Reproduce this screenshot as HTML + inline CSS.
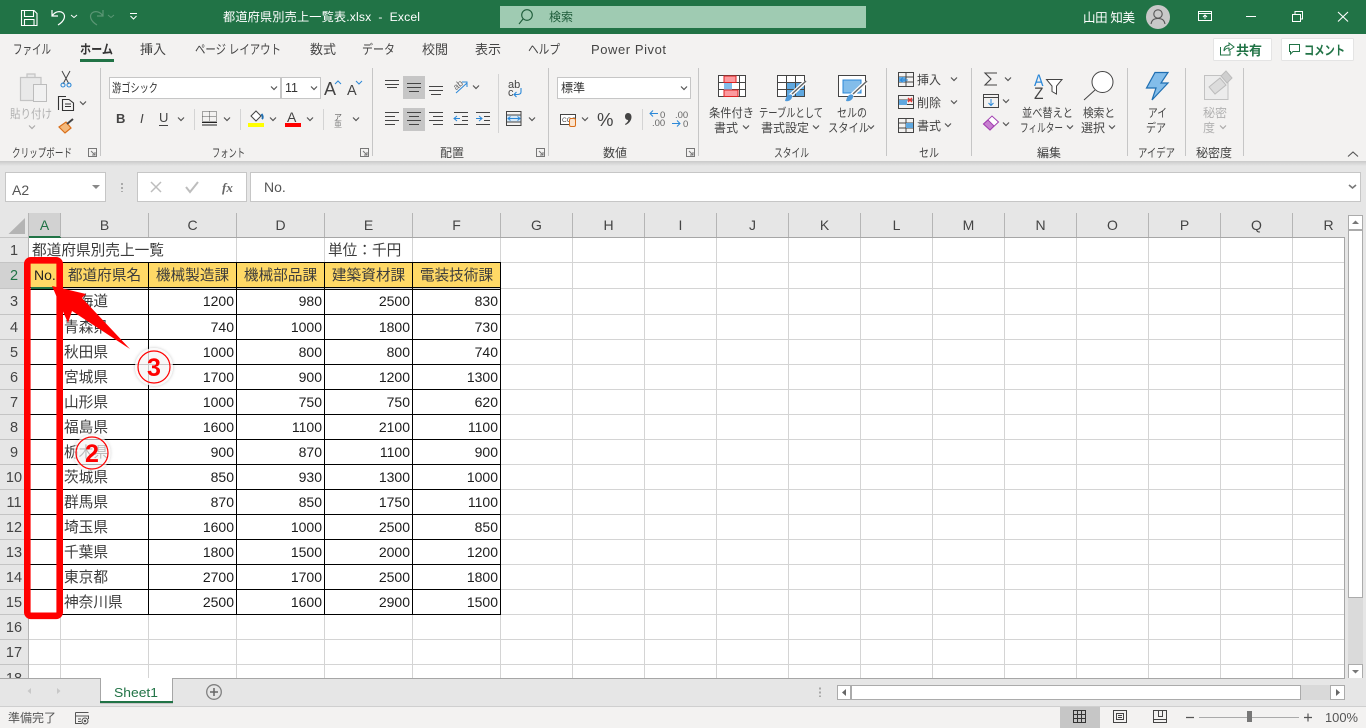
<!DOCTYPE html>
<html lang="ja"><head><meta charset="utf-8"><title>Excel</title>
<style>
html,body{margin:0;padding:0;width:1366px;height:728px;overflow:hidden;background:#e6e6e6}
svg{display:block;font-family:"Liberation Sans","Noto Sans CJK JP",sans-serif}
.r{font-size:12px;fill:#444}
.t{font-size:13px;fill:#444}
.g{font-size:12px;fill:#555}
.d{font-size:14px;fill:#1c1c1c;text-anchor:end}
.c{font-size:14.67px;fill:#3c3c3c}
.h{font-size:14.67px;fill:#3c3c3c;text-anchor:middle}
.ch{font-size:14px;fill:#444;text-anchor:middle}
.rh{font-size:14.5px;fill:#444;text-anchor:middle}
.w{font-size:12.2px;fill:#fff}
.dis{font-size:12px;fill:#b1b1b1}
</style></head><body>
<svg width="1366" height="728" viewBox="0 0 1366 728" xmlns="http://www.w3.org/2000/svg">
<defs>
<path id="cv" d="M-3 -1.5L0 1.5L3 -1.5" fill="none" stroke="#555" stroke-width="1.2"/>
<path id="dl" d="M-4.5 -4.5H3.5V3.5H-4.5ZM-2 -2L2 2M2 -1V2H-1" fill="none" stroke="#777" stroke-width="1"/>
<linearGradient id="sh" x1="0" y1="0" x2="0" y2="1"><stop offset="0" stop-color="#c9c9c9"/><stop offset="1" stop-color="#e6e6e6"/></linearGradient>
<filter id="glow" x="-30%" y="-30%" width="160%" height="160%"><feDropShadow dx="0" dy="0" stdDeviation="1.5" flood-color="#000" flood-opacity=".3"/></filter>
</defs>

<!-- sheet area -->
<rect x="0" y="165" width="1366" height="563" fill="#e6e6e6"/>
<rect x="29" y="238" width="1316" height="440" fill="#fff"/>

<!-- light grid -->
<path d="M60.5 238V678M148.5 238V678M236.5 238V678M324.5 238V678M412.5 238V678M500.5 238V678M572.5 238V678M644.5 238V678M716.5 238V678M788.5 238V678M860.5 238V678M932.5 238V678M1004.5 238V678M1076.5 238V678M1148.5 238V678M1220.5 238V678M1292.5 238V678" stroke="#d4d4d4" fill="none"/>
<path d="M29 262.5H1345M29 288.5H1345M29 314.5H1345M29 339.5H1345M29 364.5H1345M29 389.5H1345M29 414.5H1345M29 439.5H1345M29 464.5H1345M29 489.5H1345M29 514.5H1345M29 539.5H1345M29 564.5H1345M29 589.5H1345M29 614.5H1345M29 639.5H1345M29 664.5H1345" stroke="#d4d4d4" fill="none"/>
<!-- A1 text overflows across B1 and C1: no gridlines there -->
<rect x="29" y="238" width="207" height="24" fill="#fff"/>

<!-- column headers -->
<rect x="29" y="213" width="32" height="24" fill="#d2d2d2"/>
<rect x="29" y="236" width="32" height="2" fill="#217346"/>
<path d="M60.5 213V237M148.5 213V237M236.5 213V237M324.5 213V237M412.5 213V237M500.5 213V237M572.5 213V237M644.5 213V237M716.5 213V237M788.5 213V237M860.5 213V237M932.5 213V237M1004.5 213V237M1076.5 213V237M1148.5 213V237M1220.5 213V237M1292.5 213V237M28.5 213V678" stroke="#b5b5b5" fill="none"/>
<path d="M61 237.5H1345M1344.5 237V678" stroke="#a6a6a6" fill="none"/>
<path d="M25 218V234H8.5Z" fill="#b4b4b4"/>
<g class="ch">
<text x="44.5" y="230" style="fill:#217346">A</text><text x="104.5" y="230">B</text><text x="192.5" y="230">C</text><text x="280.5" y="230">D</text><text x="368.5" y="230">E</text><text x="456.5" y="230">F</text><text x="536.5" y="230">G</text><text x="608.5" y="230">H</text><text x="680.5" y="230">I</text><text x="752.5" y="230">J</text><text x="824.5" y="230">K</text><text x="896.5" y="230">L</text><text x="968.5" y="230">M</text><text x="1040.5" y="230">N</text><text x="1112.5" y="230">O</text><text x="1184.5" y="230">P</text><text x="1256.5" y="230">Q</text><text x="1328.5" y="230">R</text>
</g>

<!-- row headers -->
<rect x="0" y="263" width="28" height="25" fill="#d2d2d2"/>
<path d="M0 262.5H28M0 288.5H28M0 314.5H28M0 339.5H28M0 364.5H28M0 389.5H28M0 414.5H28M0 439.5H28M0 464.5H28M0 489.5H28M0 514.5H28M0 539.5H28M0 564.5H28M0 589.5H28M0 614.5H28M0 639.5H28M0 664.5H28M0 237.5H28" stroke="#c4c4c4" fill="none"/>
<g class="rh">
<text x="14" y="255">1</text><text x="14" y="280" style="fill:#217346">2</text><text x="14" y="306">3</text><text x="14" y="332">4</text><text x="14" y="357">5</text><text x="14" y="382">6</text><text x="14" y="407">7</text><text x="14" y="432">8</text><text x="14" y="457">9</text><text x="14" y="482">10</text><text x="14" y="507">11</text><text x="14" y="532">12</text><text x="14" y="557">13</text><text x="14" y="582">14</text><text x="14" y="607">15</text><text x="14" y="632">16</text><text x="14" y="657">17</text><text x="14" y="683">18</text>
</g>

<!-- table -->
<rect x="29" y="263" width="472" height="25" fill="#ffd966"/>
<path d="M29 262.5H501M29 287.5H501M29 289.5H501M29 314.5H501M29 339.5H501M29 364.5H501M29 389.5H501M29 414.5H501M29 439.5H501M29 464.5H501M29 489.5H501M29 514.5H501M29 539.5H501M29 564.5H501M29 589.5H501M29 614.5H501M60.5 262V615M148.5 262V615M236.5 262V615M324.5 262V615M412.5 262V615M500.5 262V615" stroke="#000" fill="none"/>
<rect x="31" y="287" width="23" height="2" fill="#217346"/>

<text class="c" x="32" y="255">都道府県別売上一覧</text>
<text class="c" x="328" y="255">単位：千円</text>
<text x="34" y="280" style="font-size:14px;fill:#222">No.</text>
<text class="h" x="104.5" y="280">都道府県名</text><text class="h" x="192.5" y="280">機械製造課</text><text class="h" x="280.5" y="280">機械部品課</text><text class="h" x="368.5" y="280">建築資材課</text><text class="h" x="456.5" y="280">電装技術課</text>

<text class="c" x="64" y="306">北海道</text><text class="d" x="234" y="306">1200</text><text class="d" x="322" y="306">980</text><text class="d" x="410" y="306">2500</text><text class="d" x="498" y="306">830</text>
<text class="c" x="64" y="332">青森県</text><text class="d" x="234" y="332">740</text><text class="d" x="322" y="332">1000</text><text class="d" x="410" y="332">1800</text><text class="d" x="498" y="332">730</text>
<text class="c" x="64" y="357">秋田県</text><text class="d" x="234" y="357">1000</text><text class="d" x="322" y="357">800</text><text class="d" x="410" y="357">800</text><text class="d" x="498" y="357">740</text>
<text class="c" x="64" y="382">宮城県</text><text class="d" x="234" y="382">1700</text><text class="d" x="322" y="382">900</text><text class="d" x="410" y="382">1200</text><text class="d" x="498" y="382">1300</text>
<text class="c" x="64" y="407">山形県</text><text class="d" x="234" y="407">1000</text><text class="d" x="322" y="407">750</text><text class="d" x="410" y="407">750</text><text class="d" x="498" y="407">620</text>
<text class="c" x="64" y="432">福島県</text><text class="d" x="234" y="432">1600</text><text class="d" x="322" y="432">1100</text><text class="d" x="410" y="432">2100</text><text class="d" x="498" y="432">1100</text>
<text class="c" x="64" y="457">栃木県</text><text class="d" x="234" y="457">900</text><text class="d" x="322" y="457">870</text><text class="d" x="410" y="457">1100</text><text class="d" x="498" y="457">900</text>
<text class="c" x="64" y="482">茨城県</text><text class="d" x="234" y="482">850</text><text class="d" x="322" y="482">930</text><text class="d" x="410" y="482">1300</text><text class="d" x="498" y="482">1000</text>
<text class="c" x="64" y="507">群馬県</text><text class="d" x="234" y="507">870</text><text class="d" x="322" y="507">850</text><text class="d" x="410" y="507">1750</text><text class="d" x="498" y="507">1100</text>
<text class="c" x="64" y="532">埼玉県</text><text class="d" x="234" y="532">1600</text><text class="d" x="322" y="532">1000</text><text class="d" x="410" y="532">2500</text><text class="d" x="498" y="532">850</text>
<text class="c" x="64" y="557">千葉県</text><text class="d" x="234" y="557">1800</text><text class="d" x="322" y="557">1500</text><text class="d" x="410" y="557">2000</text><text class="d" x="498" y="557">1200</text>
<text class="c" x="64" y="582">東京都</text><text class="d" x="234" y="582">2700</text><text class="d" x="322" y="582">1700</text><text class="d" x="410" y="582">2500</text><text class="d" x="498" y="582">1800</text>
<text class="c" x="64" y="607">神奈川県</text><text class="d" x="234" y="607">2500</text><text class="d" x="322" y="607">1600</text><text class="d" x="410" y="607">2900</text><text class="d" x="498" y="607">1500</text>

<!-- annotations -->
<rect x="27.3" y="260.3" width="32.4" height="355.5" rx="3.5" fill="none" stroke="#f00" stroke-width="6.6"/>
<path d="M52 286L86 294L82 298L130 349L72 311L68 323Z" fill="#f00"/>
<circle cx="154" cy="367" r="19" fill="#fff" fill-opacity=".75" filter="url(#glow)"/>
<circle cx="154" cy="367" r="16" fill="none" stroke="#f00" stroke-width="1.2"/>
<text x="154" y="376" text-anchor="middle" style="font-size:25px;font-weight:bold;fill:#f00">3</text>
<circle cx="92" cy="453" r="18.5" fill="#fff" fill-opacity=".62" filter="url(#glow)"/>
<circle cx="92" cy="453" r="16" fill="none" stroke="#f00" stroke-width="1.2"/>
<text x="92" y="462" text-anchor="middle" style="font-size:25px;font-weight:bold;fill:#f00">2</text>

<!-- vertical scrollbar -->
<rect x="1345" y="213" width="21" height="465" fill="#e6e6e6"/>
<rect x="1348" y="230" width="15" height="434" fill="#dadada"/>
<rect x="1348.5" y="215.5" width="14" height="14" fill="#fff" stroke="#ababab"/>
<path d="M1352 224H1359L1355.5 220.5Z" fill="#777"/>
<rect x="1348.5" y="230.5" width="14" height="367" fill="#fff" stroke="#ababab"/>
<rect x="1348.5" y="664.5" width="14" height="14" fill="#fff" stroke="#ababab"/>
<path d="M1352 670H1359L1355.5 673.5Z" fill="#777"/>
<path d="M1344.5 237V678" stroke="#a6a6a6"/>

<!-- sheet tabs bar -->
<rect x="0" y="678" width="1366" height="28" fill="#e6e6e6"/>
<path d="M0 678.5H1345" stroke="#a6a6a6"/>
<path d="M31 688V694L27.5 691ZM57 688V694L60.5 691Z" fill="#c8c8c8"/>
<path d="M100.5 679V703H172.5V679" fill="#fff" stroke="#a6a6a6"/>
<rect x="101" y="678" width="71" height="2" fill="#fff"/>
<rect x="100" y="701" width="73" height="2" fill="#217346"/>
<text x="114" y="697" textLength="44" lengthAdjust="spacingAndGlyphs" style="font-size:13px;fill:#217346">Sheet1</text>
<circle cx="214" cy="692" r="7.3" fill="none" stroke="#808080" stroke-width="1.3"/>
<path d="M210 692H218M214 688V696" stroke="#666" stroke-width="1.5"/>
<path d="M820 687.5V697" stroke="#a8a8a8" stroke-width="2" stroke-dasharray="2 2"/>
<rect x="837.5" y="685.5" width="13" height="14" fill="#fff" stroke="#ababab"/>
<path d="M846 689V696L842 692.5Z" fill="#666"/>
<rect x="851.5" y="685.5" width="449" height="14" fill="#fff" stroke="#ababab"/>
<rect x="1301" y="685" width="29" height="15" fill="#d9d9d9"/>
<rect x="1330.5" y="685.5" width="14" height="14" fill="#fff" stroke="#ababab"/>
<path d="M1336 689V696L1340 692.5Z" fill="#666"/>

<!-- status bar -->
<rect x="0" y="706" width="1366" height="22" fill="#f3f2f1"/>
<path d="M0 706.5H1366" stroke="#cfcfcf"/>
<text x="8" y="722" textLength="48" lengthAdjust="spacingAndGlyphs" style="font-size:12px;fill:#555">準備完了</text>
<path d="M75.5 712.5H88.5M75.5 712.5V723.5H82M75.5 716H88.5V719M78 719H81M78 721.5H81" stroke="#555" fill="none"/>
<circle cx="85" cy="721" r="3" fill="none" stroke="#555"/><circle cx="85" cy="721" r="1.2" fill="#555"/>
<rect x="1060" y="707" width="40" height="21" fill="#c6c6c6"/>
<path d="M1073.5 710.5H1085.5V722.5H1073.5ZM1073.5 714.5H1085.5M1073.5 718.5H1085.5M1077.5 710.5V722.5M1081.5 710.5V722.5" fill="none" stroke="#333"/>
<path d="M1113.5 710.5H1126.5V722.5H1113.5ZM1116.5 713.5H1123.5V719.5H1116.5ZM1118 715.5H1122M1118 717.5H1122" fill="none" stroke="#444"/>
<path d="M1153.5 710.5H1166.5V722.5H1153.5ZM1153.5 719.5H1166.5M1158.5 710.5V716.5H1162.5V710.5" fill="none" stroke="#444"/>
<path d="M1186 717.5H1194M1304 717.5H1312M1308 713.5V721.5" stroke="#555" stroke-width="1.2"/>
<path d="M1199 717.5H1299" stroke="#aaa"/>
<rect x="1247" y="711" width="5" height="11" fill="#777"/>
<text x="1325" y="722" textLength="33" lengthAdjust="spacingAndGlyphs" style="font-size:13px;fill:#555">100%</text>

<!-- formula bar -->
<rect x="0" y="161" width="1366" height="5" fill="url(#sh)"/>
<rect x="5.5" y="172.5" width="100" height="29" fill="#fff" stroke="#c6c6c6"/>
<text x="12" y="195" style="font-size:14px;fill:#555">A2</text>
<path d="M92 185H100L96 189Z" fill="#888"/>
<path d="M122 183V192" stroke="#aaa" stroke-width="2" stroke-dasharray="2 2"/>
<rect x="137.5" y="172.5" width="109" height="29" fill="#fff" stroke="#c6c6c6"/>
<path d="M151 182L161 192M161 182L151 192" stroke="#bdbdbd" stroke-width="1.5"/>
<path d="M186 187L190 192L198 182" stroke="#bdbdbd" stroke-width="2" fill="none"/>
<text x="222" y="192" style="font-size:13px;font-family:'Liberation Serif',serif;font-style:italic;font-weight:bold;fill:#666">fx</text>
<rect x="250.5" y="172.5" width="1110" height="29" fill="#fff" stroke="#c6c6c6"/>
<text x="264" y="192" style="font-size:14px;fill:#555">No.</text>
<path d="M1349 185L1352.5 188L1356 185" stroke="#777" stroke-width="1.6" fill="none"/>

<!-- ribbon -->
<rect x="0" y="34" width="1366" height="127" fill="#f3f2f1"/>
<rect x="0" y="0" width="1366" height="34" fill="#217346"/>

<!-- title bar -->
<path d="M21.5 10.5H34L37 13.5V25.5H21.5ZM24.5 10.5V16.5H33.5V10.5M24.5 25.5V19.5H34V25.5" fill="none" stroke="#fff" stroke-width="1.1"/>
<path d="M52 10V16H58M52.5 15.5C55 11.5 60 10.5 63 13C66 16 64.5 21 58 25" fill="none" stroke="#fff" stroke-width="1.2"/>
<path d="M71 15L74 17.5L77 15" fill="none" stroke="#fff" stroke-width="1"/>
<path d="M103 10V16H97M102.5 15.5C100 11.5 95 10.5 92 13C89 16 90.5 21 97 25" fill="none" stroke="#5b9674" stroke-width="1.2"/>
<path d="M108 15L111 17.5L114 15" fill="none" stroke="#5b9674" stroke-width="1"/>
<path d="M130 13.5H137M130.5 16L133.5 19L136.5 16" fill="none" stroke="#fff" stroke-width="1"/>
<text class="w" x="223" y="21" textLength="197" lengthAdjust="spacing">都道府県別売上一覧表.xlsx&#160;&#160;-&#160;&#160;Excel</text>
<rect x="500" y="6" width="366" height="22" fill="#9fcbb2"/>
<circle cx="527" cy="15" r="5.3" fill="none" stroke="#1e5c3a" stroke-width="1.1"/>
<path d="M523 19L519 24" stroke="#1e5c3a" stroke-width="1.1"/>
<text x="549" y="21" style="font-size:12px;fill:#1e5c3a">検索</text>
<text class="w" x="1083" y="22" textLength="52" lengthAdjust="spacing" style="font-size:12.5px">山田 知美</text>
<circle cx="1158" cy="17" r="12" fill="#c8c8c8"/>
<circle cx="1158" cy="14" r="4.2" fill="none" stroke="#555" stroke-width="1.1"/>
<path d="M1151 24C1152 19 1155 18.5 1158 18.5C1161 18.5 1164 19 1165 24" fill="none" stroke="#555" stroke-width="1.1"/>
<path d="M1198.5 11.5H1211.5V20.5H1198.5ZM1198.5 13.5H1211.5M1205 19V15M1203 17L1205 15L1207 17" fill="none" stroke="#fff"/>
<path d="M1246 16.5H1256" stroke="#fff"/>
<path d="M1292.5 14.5H1300.5V21.5H1292.5ZM1295 14V11.5H1302.5V19H1300.5" fill="none" stroke="#fff"/>
<path d="M1338 12L1348 21.5M1348 12L1338 21.5" stroke="#fff" stroke-width="1.1"/>

<!-- tabs -->
<g class="t">
<text x="13" y="54" textLength="38" lengthAdjust="spacingAndGlyphs">ファイル</text>
<text x="80" y="54" textLength="33" lengthAdjust="spacingAndGlyphs" style="font-weight:bold;fill:#333">ホーム</text>
<text x="140" y="54" textLength="26" lengthAdjust="spacingAndGlyphs">挿入</text>
<text x="195" y="54" textLength="86" lengthAdjust="spacingAndGlyphs">ページ レイアウト</text>
<text x="310" y="54" textLength="26" lengthAdjust="spacingAndGlyphs">数式</text>
<text x="362" y="54" textLength="33" lengthAdjust="spacingAndGlyphs">データ</text>
<text x="422" y="54" textLength="26" lengthAdjust="spacingAndGlyphs">校閲</text>
<text x="475" y="54" textLength="26" lengthAdjust="spacingAndGlyphs">表示</text>
<text x="528" y="54" textLength="32" lengthAdjust="spacingAndGlyphs">ヘルプ</text>
<text x="591" y="54" textLength="75" lengthAdjust="spacing">Power Pivot</text>
</g>
<rect x="80" y="59" width="34" height="3" fill="#217346"/>

<rect x="1213.5" y="38.5" width="58" height="22" rx="1" fill="#fff" stroke="#e4e4e4"/>
<path d="M1220.5 47V55H1230V51M1224 51C1224 47 1226 45.5 1229 45.5V43L1234 47L1229 50.5V48C1227 48 1225 49 1224 51Z" fill="none" stroke="#217346"/>
<text x="1236" y="55" textLength="26" style="font-size:13px;font-weight:bold;fill:#217346">共有</text>
<rect x="1281.5" y="38.5" width="72" height="22" rx="1" fill="#fff" stroke="#e4e4e4"/>
<path d="M1289.5 44.5H1299.5V51.5H1293L1290.5 54V51.5H1289.5Z" fill="none" stroke="#217346"/>
<text x="1304" y="55" textLength="41" lengthAdjust="spacingAndGlyphs" style="font-size:13px;font-weight:bold;fill:#217346">コメント</text>

<!-- ribbon separators -->
<path d="M100.5 68V156M372.5 68V156M548.5 68V156M698.5 68V156M886.5 68V156M971.5 68V156M1127.5 68V156M1185.5 68V156M1243.5 68V156" stroke="#c6c6c6"/>
<path d="M498.5 74V133M194.5 109V130M240.5 109V130M323.5 109V130M642.5 109V130" stroke="#d4d4d4"/>

<!-- clipboard -->
<path d="M20.5 77.5H41V100.5H20.5ZM27 77V74H35V77" fill="#e9e9e9" stroke="#c4c4c4" stroke-width="1.2"/>
<rect x="33.5" y="84.5" width="13" height="17" fill="#f1f1f1" stroke="#bcbcbc"/>
<text class="dis" x="10" y="118" textLength="42" lengthAdjust="spacingAndGlyphs">貼り付け</text>
<use href="#cv" x="32" y="127" opacity=".45"/>
<path d="M62 71L69 84M70 71L63 84" stroke="#444" stroke-width="1"/>
<circle cx="63" cy="85" r="2" fill="none" stroke="#2b88d8" stroke-width="1.1"/><circle cx="69" cy="85" r="2" fill="none" stroke="#2b88d8" stroke-width="1.1"/>
<path d="M58.5 110V96.5H66M62.5 99.5H69L73.5 103V110.5H62.5ZM65 104H71M65 106.5H71" fill="none" stroke="#333" stroke-width="1.1"/>
<use href="#cv" x="83" y="103"/>
<path d="M59 127L66 122L71 128L65 133Z" fill="#f5b97a" stroke="#d96f1a" stroke-width="1.2"/>
<path d="M67 124L73 119" stroke="#444" stroke-width="2"/>
<text x="12" y="157" textLength="60" lengthAdjust="spacingAndGlyphs" class="r">クリップボード</text>
<use href="#dl" x="93" y="153"/>

<!-- font -->
<rect x="109.5" y="77.5" width="171" height="21" fill="#fff" stroke="#c6c6c6"/>
<text x="112" y="92" textLength="46" lengthAdjust="spacingAndGlyphs" style="font-size:12px;fill:#333">游ゴシック</text>
<use href="#cv" x="274" y="88"/>
<rect x="281.5" y="77.5" width="39" height="21" fill="#fff" stroke="#c6c6c6"/>
<text x="285" y="92" style="font-size:12.5px;fill:#333">11</text>
<use href="#cv" x="314" y="88"/>
<text x="324" y="95" style="font-size:18px;fill:#444">A</text>
<path d="M335 84L338 81L341 84" fill="none" stroke="#2b88d8" stroke-width="1"/>
<text x="347" y="95" style="font-size:14.5px;fill:#444">A</text>
<path d="M356 81L359 84L362 81" fill="none" stroke="#2b88d8" stroke-width="1"/>
<text x="116" y="123" style="font-size:13px;font-weight:bold;fill:#444">B</text>
<text x="140" y="123" style="font-size:13px;font-style:italic;fill:#444">I</text>
<text x="159" y="122" style="font-size:13px;fill:#444">U</text>
<path d="M159 125.5H168" stroke="#444"/>
<use href="#cv" x="181" y="119"/>
<path d="M202.5 111.5H216.5V121.5H202.5ZM209.5 111.5V121.5M202.5 116.5H216.5" fill="none" stroke="#555" stroke-dasharray="1 1"/>
<path d="M202 122.5H217M202 125H217" stroke="#222"/>
<use href="#cv" x="227" y="119"/>
<path d="M251 116L256 111L261 116L256 121Z" fill="#fff" stroke="#444"/>
<path d="M261.5 114C263 116 263 118 262 119" stroke="#1f6fb2" stroke-width="2" fill="none"/>
<rect x="248" y="123" width="16" height="4" fill="#ff0"/>
<use href="#cv" x="273" y="119"/>
<text x="287" y="122" style="font-size:14px;fill:#444">A</text>
<rect x="285" y="123" width="16" height="4" fill="#f00"/>
<use href="#cv" x="310" y="119"/>
<text x="334" y="120" style="font-size:8px;fill:#666">ア</text>
<text x="334" y="127" style="font-size:8px;fill:#888">亜</text>
<use href="#cv" x="356" y="119"/>
<text class="r" x="212" y="157" textLength="33" lengthAdjust="spacingAndGlyphs">フォント</text>
<use href="#dl" x="365" y="153"/>

<!-- alignment -->
<rect x="403" y="76" width="22" height="23" fill="#c6c6c6"/>
<rect x="403" y="108" width="22" height="23" fill="#c6c6c6"/>
<path d="M385 80.5H399M385 84.5H399M387 87.5H397M407 83.5H421M407 87.5H421M409 91.5H419M429 86.5H443M429 90.5H443M431 94.5H441" stroke="#444" fill="none"/>
<path d="M385 112.5H399M385 116.5H395M385 120.5H399M385 124.5H395M407 112.5H421M409 116.5H419M407 120.5H421M409 124.5H419M429 112.5H443M433 116.5H443M429 120.5H443M433 124.5H443" stroke="#444" fill="none"/>
<text x="453" y="88" style="font-size:9px;fill:#666" transform="rotate(-40 458 85)">ab</text>
<path d="M456 93L467 83M462 82H467V87" stroke="#2b88d8" fill="none"/>
<use href="#cv" x="476" y="87"/>
<path d="M454 112.5H468M462 116.5H468M462 120.5H468M454 124.5H468" stroke="#444" fill="none"/>
<path d="M454 118.5H460M457 116L454 118.5L457 121" stroke="#2b88d8" fill="none"/>
<path d="M476 112.5H490M484 116.5H490M484 120.5H490M476 124.5H490" stroke="#444" fill="none"/>
<path d="M476 118.5H482M479 116L482 118.5L479 121" stroke="#2b88d8" fill="none"/>
<text x="508" y="88" style="font-size:11px;fill:#444">ab</text>
<text x="508" y="96" style="font-size:11px;fill:#444">c</text>
<path d="M521 88V92C521 94 519 94.5 517 94.5H514M516.5 92L514 94.5L516.5 97" stroke="#2b88d8" stroke-width="1.1" fill="none"/>
<path d="M506.5 111.5H521V125.5H506.5ZM506.5 115H521M506.5 122H521" stroke="#444" fill="none"/>
<rect x="507" y="115.5" width="13.5" height="6" fill="#d5e8f7"/>
<path d="M508 118.5H520M510.5 116.5L508 118.5L510.5 120.5M517.5 116.5L520 118.5L517.5 120.5" stroke="#2b88d8" fill="none"/>
<use href="#cv" x="532" y="119"/>
<text class="r" x="440" y="157" textLength="24" lengthAdjust="spacingAndGlyphs">配置</text>
<use href="#dl" x="541" y="153"/>

<!-- number -->
<rect x="557.5" y="77.5" width="133" height="21" fill="#fff" stroke="#c6c6c6"/>
<text x="561" y="92" style="font-size:12px;fill:#333">標準</text>
<use href="#cv" x="684" y="88"/>
<path d="M560.5 114.5H575.5V124.5H560.5Z" fill="#fff" stroke="#444"/>
<text x="562" y="122" style="font-size:6.5px;fill:#444">CCC</text>
<rect x="569.5" y="118.5" width="6" height="8" rx="1.5" fill="#fbe5cf" stroke="#d96f1a"/>
<use href="#cv" x="585" y="119"/>
<text x="597" y="126" style="font-size:18.5px;fill:#444">%</text>
<path d="M628 113C630.5 113 631.5 115 631.5 117C631.5 120.5 629 123.5 625.5 125L625 124C627 122.8 628 121.5 628.2 120C626.2 120 625 118.5 625 116.5C625 114.5 626.3 113 628 113Z" fill="#444"/>
<path d="M650 113.5H658M653 110.5L650 113.5L653 116.5" stroke="#2b88d8" fill="none"/>
<text x="660" y="118" style="font-size:9.5px;fill:#666">0</text>
<text x="652" y="126" style="font-size:9.5px;fill:#666">.00</text>
<text x="675" y="118" style="font-size:9.5px;fill:#666">.00</text>
<path d="M672 123.5H680M677 120.5L680 123.5L677 126.5" stroke="#2b88d8" fill="none"/>
<text x="683" y="127" style="font-size:9.5px;fill:#666">0</text>
<text class="r" x="603" y="157" textLength="24" lengthAdjust="spacingAndGlyphs">数値</text>
<use href="#dl" x="691" y="153"/>

<!-- styles -->
<rect x="718.5" y="75.5" width="27" height="21" fill="#fff" stroke="#444"/>
<path d="M718.5 82.5H745.5M718.5 89.5H745.5M724.5 75.5V96.5M739.5 75.5V96.5" stroke="#444" fill="none"/>
<rect x="724" y="76" width="12" height="6.5" fill="#fb9a9f" stroke="#d22" stroke-width="1"/>
<rect x="724" y="83" width="8" height="6.5" fill="#83bdea"/>
<rect x="724" y="90" width="14" height="6.5" fill="#fb9a9f" stroke="#d22" stroke-width="1"/>
<rect x="777.5" y="75.5" width="27" height="21" fill="#fff" stroke="#444"/>
<rect x="786" y="82" width="18" height="14" fill="#5fa8e0"/>
<path d="M777.5 82.5H804.5M777.5 89.5H804.5M786.5 75.5V96.5M795.5 75.5V96.5" stroke="#444" fill="none"/>
<path d="M790 96L805 82" stroke="#fff" stroke-width="4"/>
<path d="M792 94L806 81" stroke="#666" stroke-width="1.5"/>
<path d="M785 101C789 102 793 99 792 95C789 93 786 96 785 101Z" fill="#4f9ada"/>
<rect x="838.5" y="75.5" width="27" height="21" fill="#fff" stroke="#444"/>
<rect x="843" y="80" width="18" height="13" fill="#83bdea" stroke="#2b88d8"/>
<path d="M851 96L866 82" stroke="#fff" stroke-width="4"/>
<path d="M853 94L867 81" stroke="#666" stroke-width="1.5"/>
<path d="M846 101C850 102 854 99 853 95C850 93 847 96 846 101Z" fill="#4f9ada"/>
<g class="r">
<text x="709" y="117" textLength="45" lengthAdjust="spacingAndGlyphs">条件付き</text>
<text x="714" y="132" textLength="24" lengthAdjust="spacingAndGlyphs">書式</text>
<text x="759" y="117" textLength="64" lengthAdjust="spacingAndGlyphs">テーブルとして</text>
<text x="761" y="132" textLength="48" lengthAdjust="spacingAndGlyphs">書式設定</text>
<text x="837" y="117" textLength="30" lengthAdjust="spacingAndGlyphs">セルの</text>
<text x="828" y="132" textLength="41" lengthAdjust="spacingAndGlyphs">スタイル</text>
<text x="774" y="157" textLength="35" lengthAdjust="spacingAndGlyphs">スタイル</text>
</g>
<use href="#cv" x="746" y="127"/><use href="#cv" x="816" y="127"/><use href="#cv" x="871" y="127"/>

<!-- cells -->
<g fill="none" stroke="#444">
<path d="M898.5 72.5H913.5V86.5H898.5ZM898.5 77H913.5M898.5 82H913.5M906 72.5V86.5"/>
<path d="M898.5 95.5H913.5V108.5H898.5ZM898.5 100H913.5M898.5 104.5H913.5"/>
<path d="M898.5 118.5H913.5V132.5H898.5ZM898.5 123H913.5M898.5 128H913.5M906 118.5V132.5"/>
</g>
<rect x="899" y="77" width="6.5" height="5" fill="#5fa8e0"/>
<path d="M901 80H908M903 77.5L900.5 80L903 82.5" stroke="#2b88d8" fill="none"/>
<rect x="899" y="100" width="8" height="5" fill="#5fa8e0"/>
<path d="M908 98L912 102M912 98L908 102" stroke="#e33" stroke-width="1.3"/>
<rect x="906" y="123" width="7" height="5" fill="#5fa8e0"/>
<g class="r">
<text x="917" y="84" textLength="24" lengthAdjust="spacingAndGlyphs">挿入</text>
<text x="917" y="107" textLength="24" lengthAdjust="spacingAndGlyphs">削除</text>
<text x="917" y="130" textLength="24" lengthAdjust="spacingAndGlyphs">書式</text>
<text x="919" y="157" textLength="20" lengthAdjust="spacingAndGlyphs">セル</text>
</g>
<use href="#cv" x="954" y="79"/><use href="#cv" x="954" y="102"/><use href="#cv" x="948" y="125"/>

<!-- editing -->
<path d="M997 73H985L991 79L985 85H997" fill="none" stroke="#444" stroke-width="1.1"/>
<use href="#cv" x="1008" y="79"/>
<path d="M983.5 94.5H998.5V107.5H983.5ZM983.5 97.5H998.5" fill="none" stroke="#444"/>
<path d="M991 99V105M988.5 103L991 105.5L993.5 103" stroke="#2b88d8" fill="none"/>
<use href="#cv" x="1006" y="101"/>
<path d="M983.5 124L992 116L998.5 122L990 130Z" fill="#fff" stroke="#a23fb1"/>
<path d="M983.5 124L988 120L994 126L990 130Z" fill="#c77fd0" stroke="#a23fb1"/>
<use href="#cv" x="1006" y="124"/>
<text x="1034" y="86" textLength="9.5" lengthAdjust="spacingAndGlyphs" style="font-size:17px;fill:#2b88d8">A</text>
<text x="1034" y="99" textLength="9.5" lengthAdjust="spacingAndGlyphs" style="font-size:17px;fill:#444">Z</text>
<path d="M1046.5 79.5H1062L1056.5 86V94L1052 91.5V86Z" fill="#fff" stroke="#444"/>
<circle cx="1102.5" cy="82" r="10.5" fill="#fff" stroke="#444"/>
<path d="M1095 90L1084 100" stroke="#444"/>
<g class="r">
<text x="1022" y="117" textLength="51" lengthAdjust="spacingAndGlyphs">並べ替えと</text>
<text x="1020" y="132" textLength="43" lengthAdjust="spacingAndGlyphs">フィルター</text>
<text x="1083" y="117" textLength="32" lengthAdjust="spacingAndGlyphs">検索と</text>
<text x="1081" y="132" textLength="24" lengthAdjust="spacingAndGlyphs">選択</text>
<text x="1037" y="157" textLength="24" lengthAdjust="spacingAndGlyphs">編集</text>
<text x="1148" y="117" textLength="19" lengthAdjust="spacingAndGlyphs">アイ</text>
<text x="1146" y="132" textLength="20" lengthAdjust="spacingAndGlyphs">デア</text>
<text x="1138" y="157" textLength="37" lengthAdjust="spacingAndGlyphs">アイデア</text>
<text x="1196" y="157" textLength="36" lengthAdjust="spacingAndGlyphs">秘密度</text>
</g>
<use href="#cv" x="1070" y="127"/><use href="#cv" x="1112" y="127"/>

<!-- ideas / sensitivity -->
<path d="M1155 72.5H1168L1161 83H1168L1152 100L1156 88H1146.5Z" fill="#83bdea" stroke="#1f6fb2" stroke-width="1.2"/>
<path d="M1204.5 75.5H1228V99.5H1204.5Z" fill="#ececec" stroke="#c2c2c2"/>
<path d="M1209 87L1220 78L1226 85L1215 94Z" fill="#dcdcdc" stroke="#bcbcbc"/>
<path d="M1221 76L1226 71L1232 78L1227 83Z" fill="#cfcfcf" stroke="#bcbcbc"/>
<text class="dis" x="1203" y="117" textLength="24" lengthAdjust="spacingAndGlyphs">秘密</text>
<text class="dis" x="1203" y="132" textLength="12" lengthAdjust="spacingAndGlyphs">度</text>
<use href="#cv" x="1223" y="127" opacity=".45"/>
<path d="M1348 156.5L1353 152L1358 156.5" fill="none" stroke="#555" stroke-width="1.1"/>
</svg>
</body></html>
